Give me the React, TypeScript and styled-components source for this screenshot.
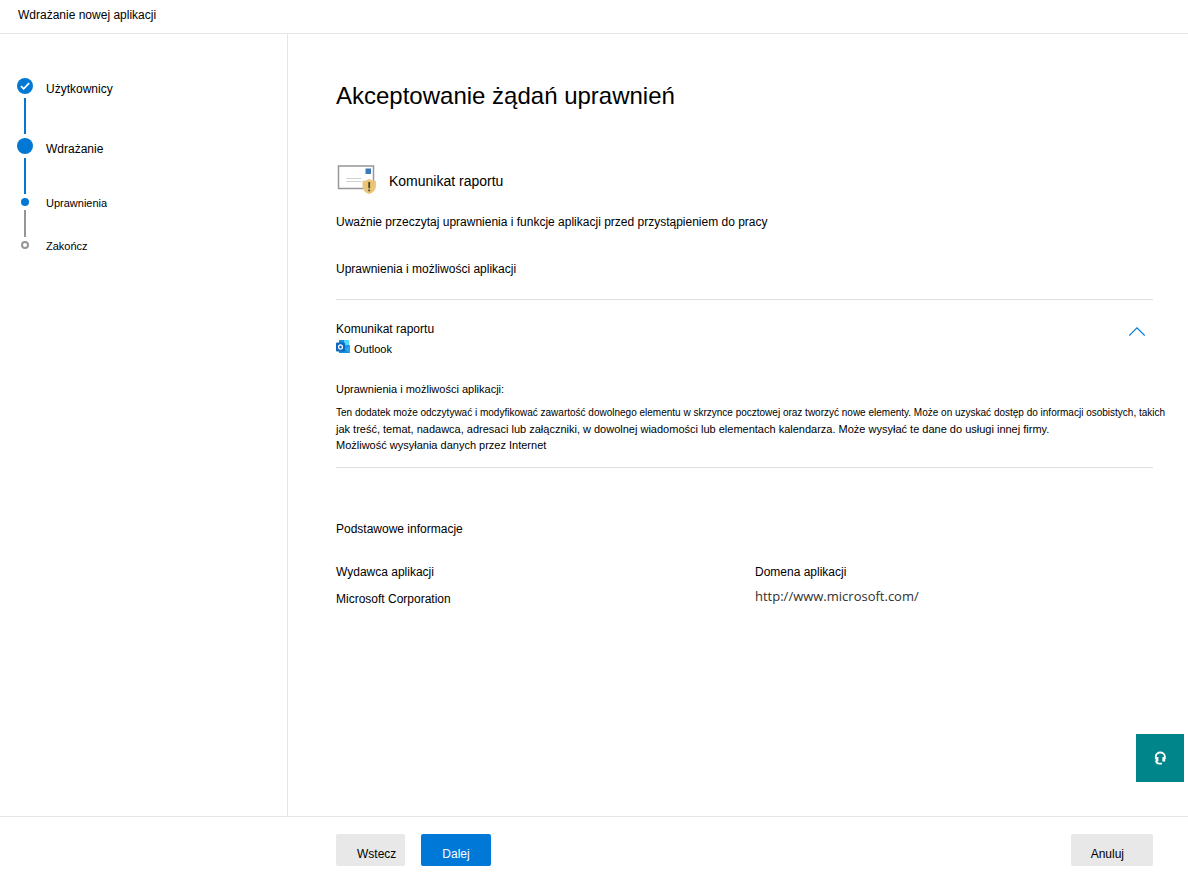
import React from "react";
import styled, { createGlobalStyle } from "styled-components";

const GlobalStyle = createGlobalStyle`
  *, *::before, *::after { box-sizing: border-box; }
  body {
    margin: 0;
    background: #fff;
    color: #000;
    font: 12px/20px "Liberation Sans", Arial, sans-serif;
  }
  h1, h2, h3, p, ol, dl, dd, dt { margin: 0; padding: 0; font-weight: 400; }
`;

const Page = styled.div`
  display: flex;
  flex-direction: column;
  min-height: 100vh;
`;

const TopBar = styled.header`
  padding: 5px 18px 8px;
  border-bottom: 1px solid #e6e6e6;
`;

const Body = styled.div`
  display: flex;
  flex: 1;
`;

const Sidebar = styled.nav`
  flex: 0 0 288px;
  padding: 44px 16px 0 17px;
  border-right: 1px solid #e6e6e6;
`;

const StepList = styled.ol`
  list-style: none;
`;

const Step = styled.li<{ $small?: boolean }>`
  display: flex;
  gap: 13px;
  font-size: ${(p) => (p.$small ? 11 : 12)}px;
  line-height: ${(p) => (p.$small ? 10 : 22)}px;
`;

const Track = styled.div`
  display: flex;
  flex-direction: column;
  align-items: center;
  gap: 4px;
  width: 16px;
`;

const Connector = styled.div<{ $pending?: boolean }>`
  width: 2px;
  height: ${(p) => (p.$pending ? 27 : 36)}px;
  margin-bottom: 4px;
  background: ${(p) => (p.$pending ? "#979593" : "#0078d4")};
`;

const Dot = styled.div<{ $size: number; $hollow?: boolean }>`
  display: flex;
  align-items: center;
  justify-content: center;
  width: ${(p) => p.$size}px;
  height: ${(p) => p.$size}px;
  border: ${(p) => (p.$hollow ? "2px solid #979593" : "0")};
  border-radius: 50%;
  background: ${(p) => (p.$hollow ? "#fff" : "#0078d4")};
`;

const Main = styled.main`
  position: relative;
  flex: 1;
  min-width: 0;
  padding: 46px 35px 100px 48px;
`;

const Title = styled.h1`
  font-size: 24px;
  line-height: 32px;
`;

const AppHeading = styled.div`
  display: flex;
  align-items: center;
  gap: 12px;
  margin: 52px 0 16px;
`;

const AppName = styled.h2`
  padding-top: 2px;
  font-size: 14px;
  line-height: 20px;
`;

const SectionLabel = styled.h2`
  margin-top: 27px;
  font-size: 12px;
`;

const Panel = styled.section`
  margin-top: 20px;
  padding: 19px 0 14px;
  border: solid #e1dfdd;
  border-width: 1px 0;
`;

const PanelHeader = styled.div`
  display: flex;
  justify-content: space-between;
  align-items: flex-start;
`;

const PanelTitle = styled.h3`
  font-size: 12px;
`;

const Product = styled.div`
  display: flex;
  gap: 4px;
  font-size: 11px;
`;

const Toggle = styled.button`
  display: flex;
  padding: 7px 8px;
  border: 0;
  background: none;
  cursor: pointer;
`;

const PanelSubtitle = styled.h3`
  margin: 20px 0 6px;
  font-size: 11px;
`;

const Details = styled.div`
  margin-right: -20px;
  font-size: 11px;
  line-height: 16px;
`;

const Lead = styled.p`
  font-size: 10px;
`;

const Facts = styled.section`
  margin-top: 51px;
`;

const FactGrid = styled.dl`
  display: grid;
  grid-template-columns: 419px 1fr;
  margin-top: 23px;
`;

const FactValue = styled.dd`
  margin-top: 7px;
`;

const UrlValue = styled.dd`
  margin-top: 4px;
  color: #323130;
  font: 13px/20px "Open Sans", "Noto Sans", sans-serif;
`;

const HelpButton = styled.button`
  position: absolute;
  right: 4px;
  bottom: 34px;
  display: flex;
  align-items: center;
  justify-content: center;
  width: 48px;
  height: 48px;
  padding: 0;
  border: 0;
  background: #00858a;
  cursor: pointer;
`;

const Footer = styled.footer`
  display: flex;
  gap: 16px;
  padding: 17px 35px 8px 336px;
  border-top: 1px solid #e6e6e6;
`;

const Button = styled.button<{ $primary?: boolean }>`
  height: 32px;
  padding: 8px 21px 0;
  border: 0;
  border-radius: 2px;
  background: ${(p) => (p.$primary ? "#0078d7" : "#e8e8e8")};
  color: ${(p) => (p.$primary ? "#fff" : "#000")};
  font: inherit;
  cursor: pointer;
`;

const BackButton = styled(Button)`
  padding-right: 9px;
`;

const CancelButton = styled(Button)`
  margin-left: auto;
  padding-left: 20px;
  padding-right: 29px;
`;

const CheckIcon = () => (
  <svg width="16" height="16" viewBox="0 0 16 16" fill="none" stroke="#fff" strokeWidth="1.8" aria-hidden="true">
    <path d="M4 8.2l2.7 2.6L12.2 5" />
  </svg>
);

const ReportIcon = () => (
  <svg width="41" height="32" viewBox="0 0 41 32" aria-hidden="true">
    <rect x="2.5" y="2" width="35" height="22.5" fill="#fff" stroke="#979797" strokeWidth="1.5" />
    <rect x="29.5" y="4.5" width="5.5" height="5.5" fill="#3f78b8" />
    <path d="M10.5 14.5h15M10.5 17.5h15" stroke="#d0d0d0" />
    <path d="M33.2 14.8c-2 1.6-4 2.2-6.7 2.2v5c0 4 2.700 6.600 6.700 8 4-1.400 6.700-4 6.700-8v-5c-2.400 0-4.700-.6-6.700-2.200z" fill="#eac577" />
    <path d="M33.200 18v6.200M33.200 25.500v1.800" stroke="#4a4030" strokeWidth="1.800" />
  </svg>
);

const OutlookIcon = () => (
  <svg width="14" height="16" viewBox="0 0 14 16" aria-hidden="true">
    <path d="M3 1h10v7H3z" fill="#28a8ea" />
    <path d="M8 1h5v5H8z" fill="#50d9ff" />
    <path d="M3 1h5v3H3z" fill="#1490df" />
    <path d="M3 8l11-2v8H3z" fill="#1490df" />
    <path d="M14 6.5v7.500L8 10z" fill="#28a8ea" />
    <rect y="3.5" width="9" height="9" rx="1" fill="#0f68bd" />
    <ellipse cx="4.5" cy="8" rx="1.900" ry="2.100" fill="none" stroke="#fff" strokeWidth="1.200" />
  </svg>
);

const ChevronUp = () => (
  <svg width="16" height="10" viewBox="0 0 16 10" fill="none" stroke="#0078d4" strokeWidth="1.1" aria-hidden="true">
    <path d="M0.3 9.5L8 1.8 15.7 9.5" />
  </svg>
);

const HeadsetIcon = () => (
  <svg width="14" height="16" viewBox="0 0 14 16" fill="none" stroke="#fff" aria-hidden="true">
    <path d="M2.800 9V6.500a4.500 4 0 0 1 9 0V9" strokeWidth="1.800" />
    <path d="M4 7v4.500M10.800 7v4.500" strokeWidth="2.800" />
    <path d="M3 11c.4 1.800 1.400 2.600 3 2.600h3" strokeWidth="1.800" />
  </svg>
);

export default function App() {
  return (
    <Page>
      <GlobalStyle />
      <TopBar>Wdrażanie nowej aplikacji</TopBar>
      <Body>
        <Sidebar>
          <StepList>
            <Step>
              <Track>
                <Dot $size={16}><CheckIcon /></Dot>
                <Connector />
              </Track>
              Użytkownicy
            </Step>
            <Step>
              <Track>
                <Dot $size={16} />
                <Connector />
              </Track>
              Wdrażanie
            </Step>
            <Step $small aria-current="step">
              <Track>
                <Dot $size={8} />
                <Connector $pending />
              </Track>
              Uprawnienia
            </Step>
            <Step $small>
              <Track>
                <Dot $size={8} $hollow />
              </Track>
              Zakończ
            </Step>
          </StepList>
        </Sidebar>
        <Main>
          <Title>Akceptowanie żądań uprawnień</Title>
          <AppHeading>
            <ReportIcon />
            <AppName>Komunikat raportu</AppName>
          </AppHeading>
          <p>Uważnie przeczytaj uprawnienia i funkcje aplikacji przed przystąpieniem do pracy</p>
          <SectionLabel>Uprawnienia i możliwości aplikacji</SectionLabel>
          <Panel>
            <PanelHeader>
              <div>
                <PanelTitle>Komunikat raportu</PanelTitle>
                <Product>
                  <OutlookIcon />
                  Outlook
                </Product>
              </div>
              <Toggle type="button" aria-expanded="true" aria-label="Komunikat raportu">
                <ChevronUp />
              </Toggle>
            </PanelHeader>
            <PanelSubtitle>Uprawnienia i możliwości aplikacji:</PanelSubtitle>
            <Details>
              <Lead>
                Ten dodatek może odczytywać i modyfikować zawartość dowolnego elementu w skrzynce pocztowej oraz tworzyć nowe elementy. Może on uzyskać dostęp do informacji osobistych, takich
              </Lead>
              <p>
                jak treść, temat, nadawca, adresaci lub załączniki, w dowolnej wiadomości lub elementach kalendarza. Może wysyłać te dane do usługi innej firmy.
              </p>
              <p>Możliwość wysyłania danych przez Internet</p>
            </Details>
          </Panel>
          <Facts>
            <PanelTitle>Podstawowe informacje</PanelTitle>
            <FactGrid>
              <div>
                <dt>Wydawca aplikacji</dt>
                <FactValue>Microsoft Corporation</FactValue>
              </div>
              <div>
                <dt>Domena aplikacji</dt>
                <UrlValue>http://www.microsoft.com/</UrlValue>
              </div>
            </FactGrid>
          </Facts>
          <HelpButton type="button" aria-label="Pomoc">
            <HeadsetIcon />
          </HelpButton>
        </Main>
      </Body>
      <Footer>
        <BackButton type="button">Wstecz</BackButton>
        <Button type="button" $primary>Dalej</Button>
        <CancelButton type="button">Anuluj</CancelButton>
      </Footer>
    </Page>
  );
}
